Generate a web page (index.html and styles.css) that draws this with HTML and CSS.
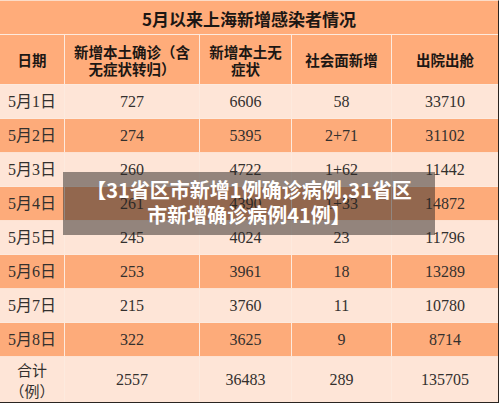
FILE: index.html
```html
<!DOCTYPE html>
<html lang="zh-CN">
<head>
    <meta charset="UTF-8">
    <meta name="viewport" content="width=device-width, initial-scale=1.0">
    <title>5月以来上海新增感染者情况</title>
    <link rel="stylesheet" href="styles.css">
</head>
<body>
    <div class="sheet">
        <table class="cases">
            <colgroup>
                <col class="col-date">
                <col class="col-local">
                <col class="col-asym">
                <col class="col-social">
                <col class="col-out">
            </colgroup>
            <tr class="title-row">
                <th colspan="5">5月以来上海新增感染者情况</th>
            </tr>
            <tr class="head-row">
                <th>日期</th>
                <th>新增本土确诊（含无症状转归）</th>
                <th>新增本土无症状</th>
                <th>社会面新增</th>
                <th>出院出舱</th>
            </tr>
            <tr><td>5月1日</td><td>727</td><td>6606</td><td>58</td><td>33710</td></tr>
            <tr class="hot"><td>5月2日</td><td>274</td><td>5395</td><td>2+71</td><td>31102</td></tr>
            <tr><td>5月3日</td><td>260</td><td>4722</td><td>1+62</td><td>11442</td></tr>
            <tr class="hot"><td>5月4日</td><td>261</td><td>4390</td><td>1+33</td><td>14872</td></tr>
            <tr><td>5月5日</td><td>245</td><td>4024</td><td>23</td><td>11796</td></tr>
            <tr class="hot"><td>5月6日</td><td>253</td><td>3961</td><td>18</td><td>13289</td></tr>
            <tr><td>5月7日</td><td>215</td><td>3760</td><td>11</td><td>10780</td></tr>
            <tr class="hot"><td>5月8日</td><td>322</td><td>3625</td><td>9</td><td>8714</td></tr>
            <tr class="total-row">
                <td>合计<br>（例）</td><td>2557</td><td>36483</td><td>289</td><td>135705</td>
            </tr>
        </table>

        <!-- headline caption laid over the table -->
        <div class="caption">
            <p>【31省区市新增1例确诊病例,31省区<br>市新增确诊病例41例】</p>
        </div>
    </div>
</body>
</html>
```

FILE: styles.css
```css
body {
    margin: 0;
    background: #ffffff;
}

.sheet {
    position: relative;
    width: 499px;
}

.cases {
    width: 499px;
    table-layout: fixed;
    border-collapse: separate;
    border-spacing: 0;
    border-top: 1px solid #fcdcc8;
    border-right: 1px solid #2a2420;
    border-bottom: 1px solid #2a2420;
}

.col-date { width: 65px; }
.col-local { width: 135px; }
.col-asym { width: 92px; }
.col-social { width: 100px; }
.col-out { width: 106px; }

.cases th,
.cases td {
    box-sizing: border-box;
    padding: 0 5px;
    text-align: center;
    vertical-align: middle;
    border-right: 1px solid #fdeade;
    border-bottom: 1px solid #fdeade;
}

.cases th:last-child,
.cases td:last-child {
    border-right: none;
}

.cases th {
    background: #ffac7a;
    color: #1c1714;
    font-family: "Noto Sans CJK SC", sans-serif;
    font-weight: bold;
    font-size: 14.5px;
    line-height: 17px;
}

.title-row th {
    height: 34px;
    font-size: 17px;
    padding-top: 1px;
}

.head-row th {
    height: 50px;
}

.cases td {
    height: 34px;
    background: #fee5d7;
    color: #33302e;
    font-family: "Liberation Serif", "Noto Sans CJK SC", serif;
    font-size: 16px;
    line-height: 20px;
}

.cases tr.hot td {
    background: #fdab7a;
    border-bottom-color: #fde2d2;
}

.cases tr.total-row td {
    height: 45px;
    border-bottom: none;
}

.cases tr.total-row td:first-child {
    font-family: "Noto Sans CJK SC", sans-serif;
    font-size: 15px;
    line-height: 21px;
}

.caption {
    position: absolute;
    left: 63px;
    top: 172px;
    width: 372px;
    height: 63px;
    background: rgba(40, 36, 34, 0.5);
    display: flex;
    align-items: center;
    justify-content: center;
}

.caption p {
    margin: 0;
    padding-bottom: 4px;
    color: #ffffff;
    font-family: "Noto Sans CJK SC", sans-serif;
    font-weight: bold;
    font-size: 20px;
    line-height: 25px;
    text-align: center;
}
```
